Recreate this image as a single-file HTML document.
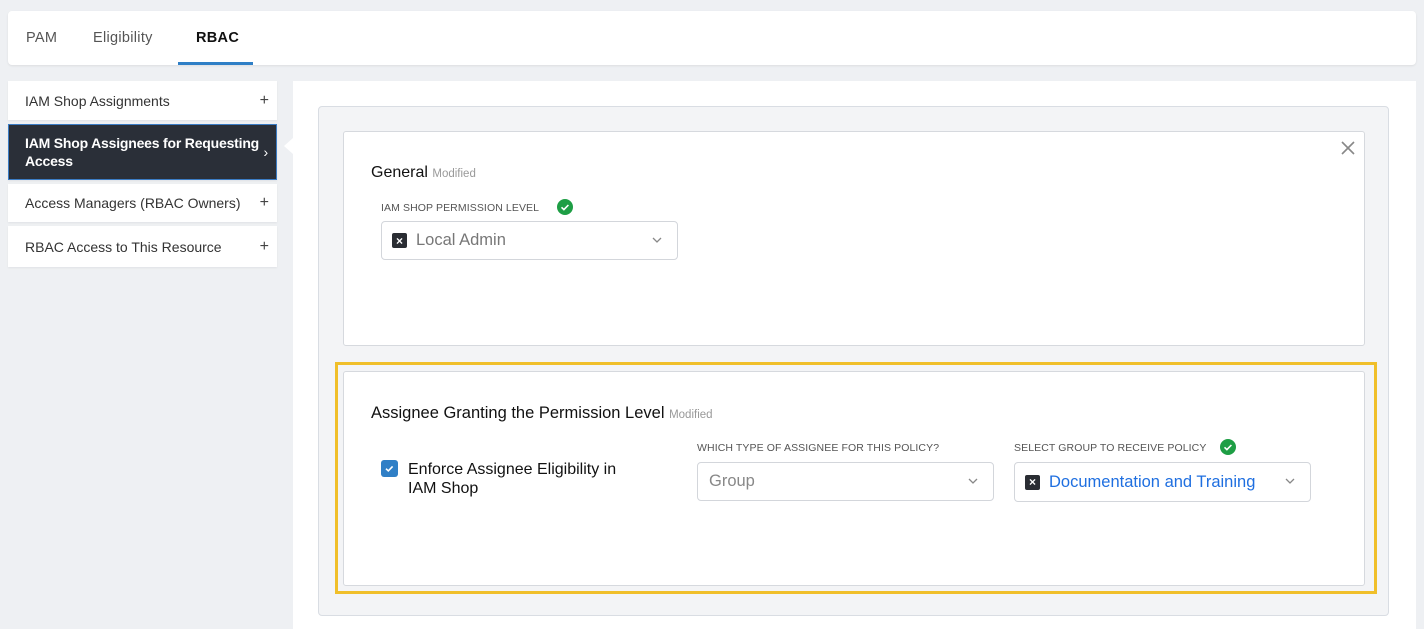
<!DOCTYPE html>
<html><head><style>
*{box-sizing:border-box;margin:0;padding:0}
body{width:1424px;height:629px;background:#eef0f3;font-family:"Liberation Sans",sans-serif;position:relative;overflow:hidden;color:#222}
.abs{position:absolute}
.tabs{left:8px;top:11px;width:1408px;height:54px;background:#fff;border-radius:4px;box-shadow:0 1px 2px rgba(0,0,0,.08)}
.tab{position:absolute;top:19px;font-size:14.5px;color:#555;letter-spacing:.3px}
.item{position:absolute;left:8px;width:269px;background:#fff;font-size:14px;color:#333;padding-left:17px;display:flex;align-items:center;box-shadow:0 1px 2px rgba(0,0,0,.06)}
.plus{position:absolute;right:8px;font-size:16px;color:#444}
.lbl{position:absolute;font-size:10.5px;color:#555;letter-spacing:.1px}
.sel{position:absolute;background:#fff;border:1px solid #d3d6db;border-radius:4px;height:39px;display:flex;align-items:center;font-size:16.5px;color:#888}
.xb{width:15px;height:15px;background:#2a2d33;border-radius:2px;color:#fff;font-size:12px;font-weight:bold;display:flex;align-items:center;justify-content:center;margin:0 9px 0 10px}
.chev{position:absolute;right:14px;top:12px}
.ok{position:absolute;width:16px;height:16px;border-radius:50%;background:#1e9e45}
</style></head><body>
<div class="abs tabs">
<span class="tab" style="left:18px">PAM</span>
<span class="tab" style="left:85px">Eligibility</span>
<span class="tab" style="left:188px;color:#111;font-weight:bold">RBAC</span>
<div class="abs" style="left:170px;top:51px;width:75px;height:3px;background:#2f7fc6"></div>
</div>
<div class="item" style="top:81px;height:39px">IAM Shop Assignments<span class="plus">+</span></div>
<div class="item" style="top:124px;height:56px;background:#2a2f38;color:#fff;font-weight:bold;line-height:18px;border:1px solid #3b7cc4;padding-left:16px;font-size:14px;letter-spacing:-.2px">IAM Shop Assignees for Requesting<br>Access<span class="plus" style="color:#fff;font-weight:normal;font-size:14px">›</span></div>
<div class="item" style="top:184px;height:38px">Access Managers (RBAC Owners)<span class="plus">+</span></div>
<div class="item" style="top:226px;height:41px">RBAC Access to This Resource<span class="plus">+</span></div>
<div class="abs" style="left:293px;top:81px;width:1123px;height:548px;background:#fff"></div>
<div class="abs" style="left:284px;top:138px;width:0;height:0;border-top:8px solid transparent;border-bottom:8px solid transparent;border-right:9px solid #fff"></div>
<div class="abs" style="left:318px;top:106px;width:1071px;height:510px;background:#f3f4f6;border:1px solid #d9dde3;border-radius:4px"></div>
<div class="abs" style="left:343px;top:131px;width:1022px;height:215px;background:#fff;border:1px solid #d6d9de;border-radius:3px"></div>
<svg class="abs" style="left:1340px;top:140px" width="16" height="16"><path d="M2 2L14 14M14 2L2 14" stroke="#888" stroke-width="1.6"/></svg>
<div class="abs" style="left:371px;top:164px;font-size:16px;color:#111">General <span style="font-size:11.5px;color:#999">Modified</span></div>
<div class="lbl" style="left:381px;top:202px">IAM SHOP PERMISSION LEVEL</div>
<div class="ok" style="left:557px;top:199px"><svg width="16" height="16"><path d="M4.5 8.3l2.4 2.3 4.5-4.6" stroke="#fff" stroke-width="1.6" fill="none"/></svg></div>
<div class="sel" style="left:381px;top:221px;width:297px;color:#777"><div class="xb">×</div>Local Admin<svg class="chev" width="12" height="12"><path d="M2 4l4 4 4-4" stroke="#888" stroke-width="1.3" fill="none"/></svg></div>
<div class="abs" style="left:335px;top:362px;width:1042px;height:232px;border:3px solid #f0bf2a"></div>
<div class="abs" style="left:343px;top:371px;width:1022px;height:215px;background:#fff;border:1px solid #d6d9de;border-radius:3px"></div>
<div class="abs" style="left:371px;top:404px;font-size:16.5px;color:#111">Assignee Granting the Permission Level <span style="font-size:11.5px;color:#999">Modified</span></div>
<div class="abs" style="left:381px;top:460px;width:17px;height:17px;background:#2f7fc6;border-radius:3px"><svg width="17" height="17"><path d="M5 8.7l2.3 2.2 4.3-4.5" stroke="#fff" stroke-width="1.6" fill="none"/></svg></div>
<div class="abs" style="left:408px;top:460px;font-size:16px;color:#111;line-height:19px">Enforce Assignee Eligibility in<br>IAM Shop</div>
<div class="lbl" style="left:697px;top:442px">WHICH TYPE OF ASSIGNEE FOR THIS POLICY?</div>
<div class="sel" style="left:697px;top:462px;width:297px;padding-left:11px">Group<svg class="chev" width="12" height="12"><path d="M2 4l4 4 4-4" stroke="#888" stroke-width="1.3" fill="none"/></svg></div>
<div class="lbl" style="left:1014px;top:442px">SELECT GROUP TO RECEIVE POLICY</div>
<div class="ok" style="left:1220px;top:439px"><svg width="16" height="16"><path d="M4.5 8.3l2.4 2.3 4.5-4.6" stroke="#fff" stroke-width="1.6" fill="none"/></svg></div>
<div class="sel" style="left:1014px;top:462px;width:297px;height:40px;color:#1f6fe0"><div class="xb">×</div>Documentation and Training<svg class="chev" width="12" height="12"><path d="M2 4l4 4 4-4" stroke="#888" stroke-width="1.3" fill="none"/></svg></div>
</body></html>
